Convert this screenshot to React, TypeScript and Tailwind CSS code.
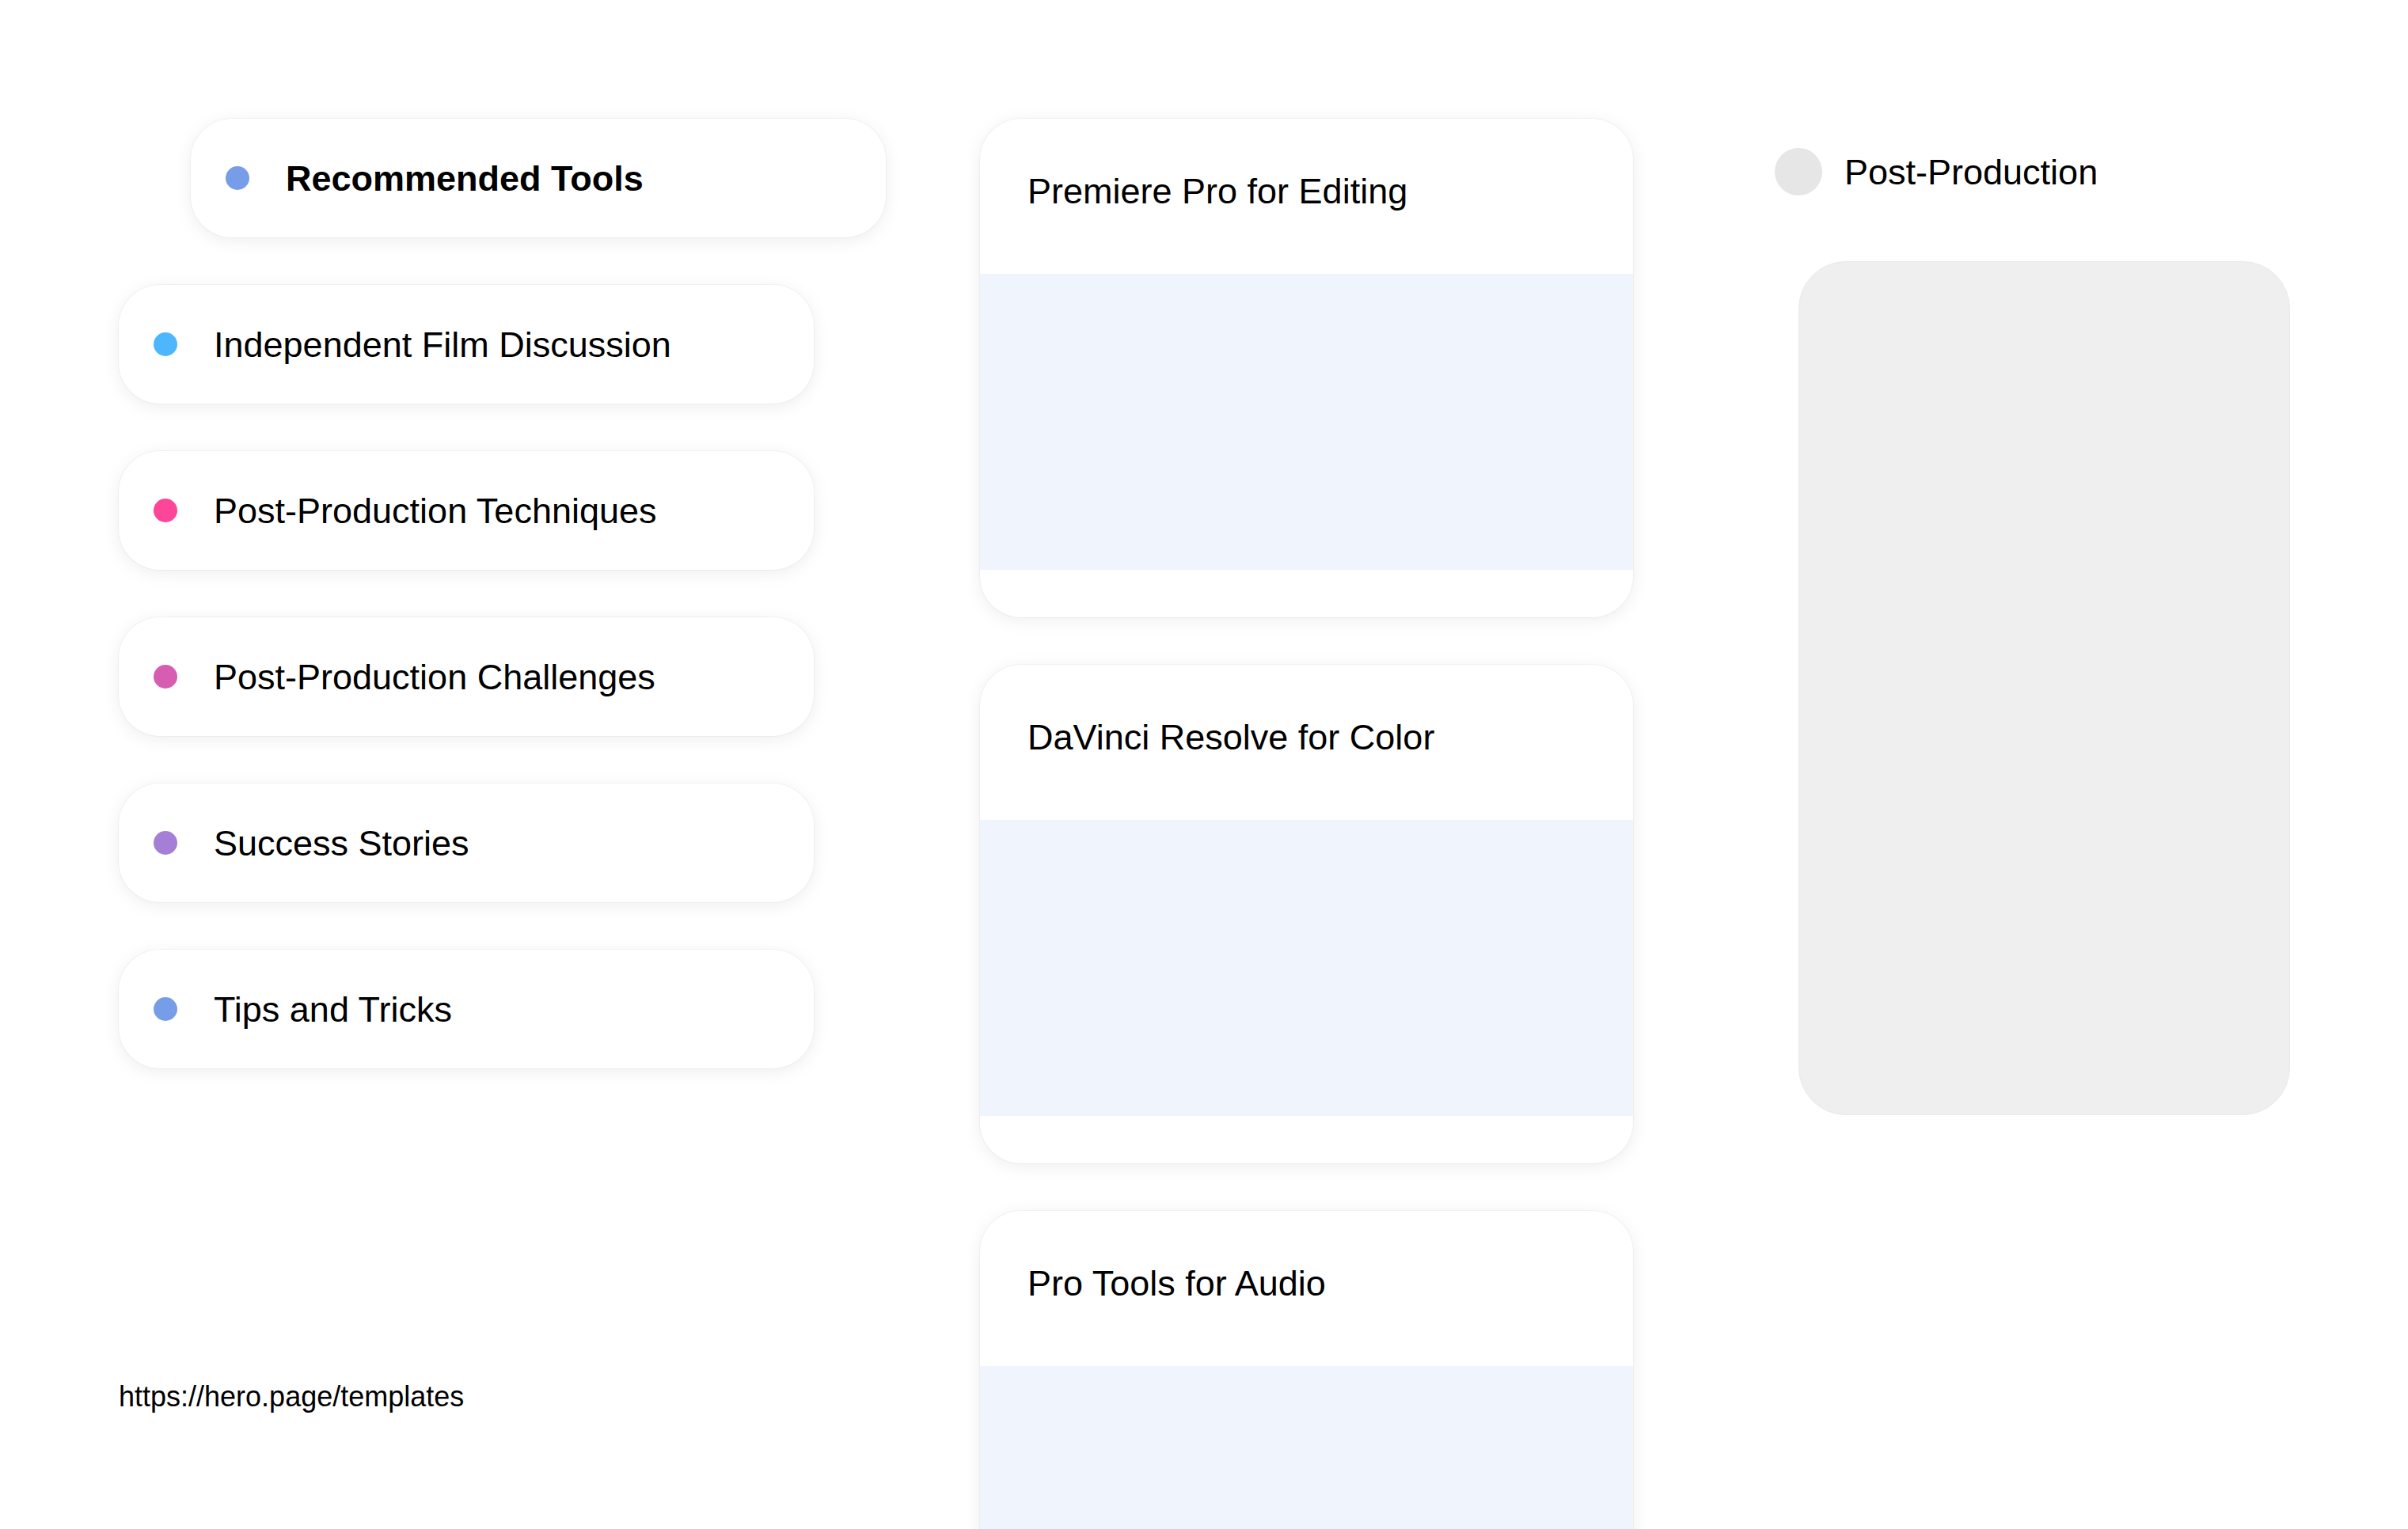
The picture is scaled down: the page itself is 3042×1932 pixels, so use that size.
const topics = [
    { label: "Independent Film Discussion", dot: "bg-[#4db6fd]" },
    { label: "Post-Production Techniques", dot: "bg-[#fd4599]" },
    { label: "Post-Production Challenges", dot: "bg-[#d75db3]" },
    { label: "Success Stories", dot: "bg-[#a57fd6]" },
    { label: "Tips and Tricks", dot: "bg-[#789de8]" },
]

const tools = ["Premiere Pro for Editing", "DaVinci Resolve for Color", "Pro Tools for Audio"]

const cardShadow = "shadow-[0_4px_22px_rgba(0,0,0,0.07),0_0_0_1px_rgba(0,0,0,0.035)]"

const TopicPill = ({ label, dot, bold = false }: { label: string, dot: string, bold?: boolean }) => {
    return <div className={`flex items-center gap-[46px] h-[150px] w-[878px] px-[44px] bg-white rounded-[52px] ${cardShadow}`}>
        <span className={`w-[30px] h-[30px] rounded-full shrink-0 ${dot}`} />
        <span className={`text-[45px] leading-none text-black ${bold ? "font-bold" : ""}`}>{label}</span>
    </div>
}

const ToolCard = ({ title }: { title: string }) => {
    return <div className={`w-[825px] h-[630px] shrink-0 bg-white rounded-[52px] overflow-hidden flex flex-col ${cardShadow}`}>
        <div className="h-[196px] px-[60px] pt-[58px]">
            <h3 className="text-[45px] leading-[1.5] text-black">{title}</h3>
        </div>
        <div className="h-[374px] bg-[#f0f4fc]" />
    </div>
}

const App = () => {
    return <div className="h-screen w-full overflow-hidden bg-white font-['Liberation_Sans',Arial,sans-serif]">
        <div className="flex pl-[150px] pt-[150px]">
            {/* topics */}
            <div className="w-[1088px] flex flex-col gap-[60px]">
                <div className="pl-[91px]">
                    <TopicPill label="Recommended Tools" dot="bg-[#789de8]" bold />
                </div>
                {topics.map(t => <TopicPill key={t.label} label={t.label} dot={t.dot} />)}
                <a href="https://hero.page/templates" className="mt-[337px] text-[36px] leading-none text-black">
                    https://hero.page/templates
                </a>
            </div>

            {/* tools */}
            <div className="flex flex-col gap-[60px]">
                {tools.map(t => <ToolCard key={t} title={t} />)}
            </div>

            {/* stage */}
            <div className="ml-[179px] mt-[37px] flex flex-col">
                <div className="flex items-center gap-[28px] h-[60px]">
                    <span className="w-[60px] h-[60px] rounded-full bg-[#e6e6e6] shrink-0" />
                    <span className="text-[45px] leading-none text-black">Post-Production</span>
                </div>
                <div className="ml-[30px] mt-[83px] w-[621px] h-[1079px] rounded-[60px] bg-[#efefef] border border-[#e9e9e9]" />
            </div>
        </div>
    </div>
}

export default App
